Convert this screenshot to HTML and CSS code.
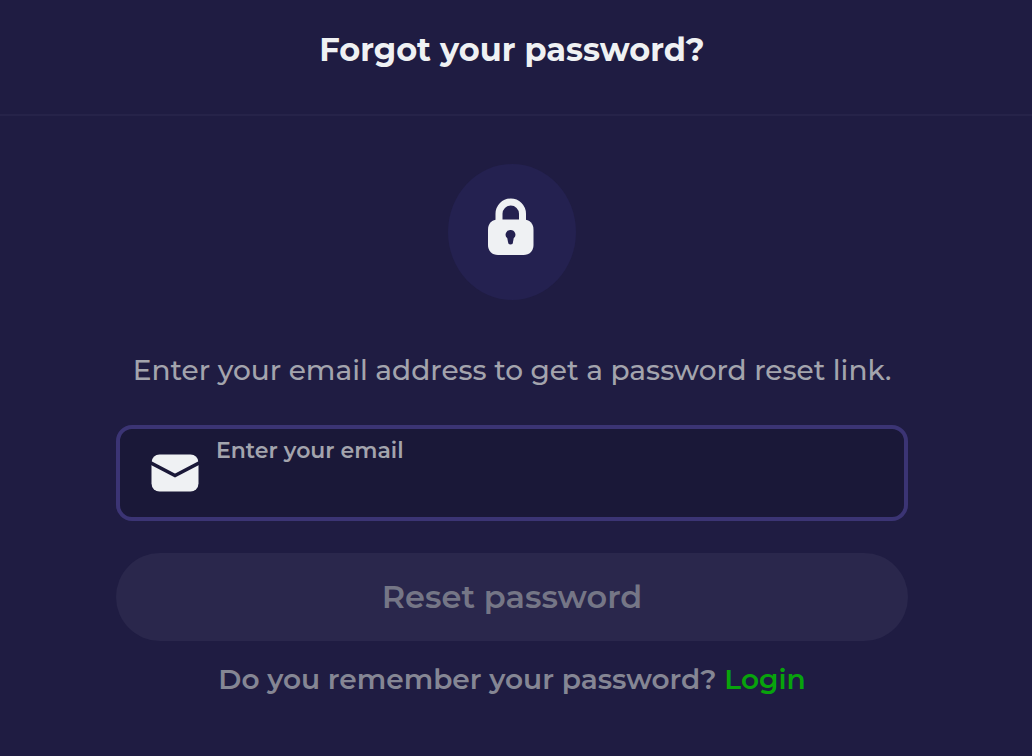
FILE: index.html
```html
<!DOCTYPE html>
<html lang="en">
<head>
    <meta charset="UTF-8">
    <meta name="viewport" content="width=device-width, initial-scale=1.0">
    <title>Forgot your password?</title>
    <link rel="stylesheet" href="styles.css">
</head>
<body>
    <header class="header">
        <h1>Forgot your password?</h1>
    </header>

    <main class="content">
        <div class="lock">
            <svg width="46" height="58" viewBox="0 0 46 58" aria-hidden="true">
                <path d="M11 25V15.750a11.750 11.750 0 0 1 23.500 0V25" fill="none" stroke="#eff1f3" stroke-width="7"/>
                <path d="M10 21.500h25.500c6 0 10 4 10 10V47c0 6-4 10-10 10H10C4 57 0 53 0 47V31.500c0-6 4-10 10-10z" fill="#eff1f3"/>
                <path d="M22.500 32a4.700 4.700 0 0 1 3.200 8.300l-.7 3.700a2.500 2.500 0 0 1-5 0l-.7-3.700a4.700 4.700 0 0 1 3.200-8.300z" fill="#242150"/>
            </svg>
        </div>

        <p class="intro">Enter your email address to get a password reset link.</p>

        <form class="form">
            <div class="field">
                <svg width="48" height="38" viewBox="0 0 48 38" aria-hidden="true">
                    <rect x="0.5" y="0.5" width="47" height="37" rx="8" fill="#eff1f3"/>
                    <path d="M-1 8.500l25 13L49 8.500" fill="none" stroke="#1a1838" stroke-width="3.500"/>
                </svg>
                <div class="field-body">
                    <label for="email">Enter your email</label>
                    <input type="email" id="email" name="email">
                </div>
            </div>
            <button type="submit" class="reset" disabled>Reset password</button>
        </form>

        <p class="login">Do you remember your password? <a href="#login">Login</a></p>
    </main>
</body>
</html>
```

FILE: styles.css
```css
* {
    box-sizing: border-box;
}
body {
    margin: 0;
    background: #1f1c42;
    color: #eff1f3;
    font-family: Montserrat, "Open Sans", sans-serif;
}
.header {
    padding: 28px 28px 42px 20px;
    border-bottom: 2px solid #262349;
    text-align: center;
}
h1 {
    margin: 0;
    font-size: 32px;
    line-height: 44px;
    font-weight: 700;
}
.content {
    display: flex;
    flex-direction: column;
    align-items: center;
    padding: 48px 124px 48px 116px;
}
.lock {
    display: flex;
    justify-content: center;
    width: 128px;
    height: 136px;
    padding: 34px 2px 0 0;
    border-radius: 50%;
    background: #242150;
}
.intro {
    margin: 51px 0 36px;
    font-size: 28px;
    line-height: 38px;
    font-weight: 500;
    color: #a3a4ad;
}
.form {
    width: 100%;
}
.field {
    display: flex;
    align-items: center;
    gap: 17px;
    height: 96px;
    padding: 0 31px;
    border: 4px solid #3b3474;
    border-radius: 16px;
    background: #1a1838;
}
.field-body {
    flex: 1;
    align-self: stretch;
    display: flex;
    flex-direction: column;
    padding-top: 8px;
}
label {
    font-size: 22px;
    line-height: 28px;
    font-weight: 600;
    color: #a3a4ad;
}
input {
    width: 100%;
    height: 44px;
    padding: 0;
    border: 0;
    outline: 0;
    background: transparent;
    color: #eff1f3;
    font: inherit;
    font-size: 28px;
}
.reset {
    width: 100%;
    height: 88px;
    margin-top: 32px;
    padding: 0 0 2px;
    border: 0;
    border-radius: 44px;
    background: #2a274c;
    color: #757686;
    font-family: inherit;
    font-size: 32px;
    font-weight: 600;
}
.login {
    margin: 19px 0 0;
    font-size: 28px;
    line-height: 38px;
    font-weight: 600;
    color: #858694;
}
.login a {
    color: #08a30c;
    text-decoration: none;
}
```
